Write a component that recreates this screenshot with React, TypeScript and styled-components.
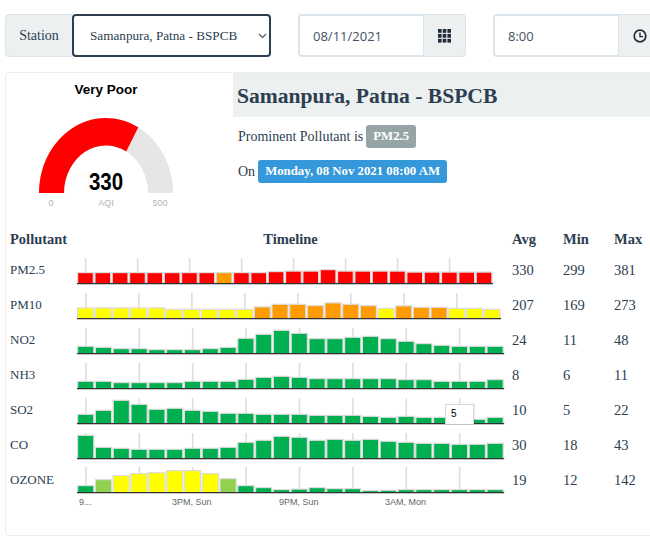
import React, { FC } from "react";
import styled, { createGlobalStyle } from "styled-components";

type Level = "g" | "l" | "y" | "o" | "r";

interface Series {
  name: string;
  pitch: number;
  heights: number[];
  levels: (i: number) => Level;
  avg: number;
  min: number;
  max: number;
}

const FILL: Record<Level, string> = {
  g: "#00b050",
  l: "#92d050",
  y: "#ffff00",
  o: "#ff9a00",
  r: "#ff0000",
};

const SERIES: Series[] = [
  {
    name: "PM2.5",
    pitch: 17.33,
    heights: [11, 11, 11, 11, 11, 11, 11, 11, 11, 11, 11, 12, 12.5, 12.5, 14, 12.5, 12.5, 12.5, 12.5, 11.5, 11.5, 11.5, 11.5, 11.5],
    levels: (i) => (i === 8 ? "o" : "r"),
    avg: 330,
    min: 299,
    max: 381,
  },
  {
    name: "PM10",
    pitch: 17.67,
    heights: [10.7, 10.7, 10.7, 10.7, 10.7, 9.3, 9.3, 9.3, 9.3, 9.3, 11.7, 14.3, 14.3, 13, 15.7, 14.3, 13, 10.3, 12.7, 11.3, 11.3, 10.3, 10.3, 9.3],
    levels: (i) => ((i >= 10 && i <= 16) || (i >= 18 && i <= 20) ? "o" : "y"),
    avg: 207,
    min: 169,
    max: 273,
  },
  {
    name: "NO2",
    pitch: 17.8,
    heights: [7.3, 6.3, 5, 5, 4, 4, 4, 5, 6.3, 15.3, 19.3, 23.3, 20.3, 15, 15, 16.3, 17.3, 15, 12.3, 10, 8.3, 7.3, 7.3, 7.3],
    levels: () => "g",
    avg: 24,
    min: 11,
    max: 48,
  },
  {
    name: "NH3",
    pitch: 17.8,
    heights: [7.3, 7.3, 6, 6, 6, 6, 7.3, 7.3, 7.3, 9.3, 11.3, 12.3, 11.3, 10, 10, 10, 10, 10, 9, 9, 7.3, 7.3, 7.3, 9],
    levels: () => "g",
    avg: 8,
    min: 6,
    max: 11,
  },
  {
    name: "SO2",
    pitch: 17.8,
    heights: [9.3, 13.3, 23.3, 19.3, 14.3, 15.3, 13.3, 12.3, 10.3, 10.3, 9.3, 9.3, 9.3, 8.3, 8.3, 8.3, 7.3, 6.3, 7.3, 6.3, 6.3, 6.3, 4.3, 6.3],
    levels: () => "g",
    avg: 10,
    min: 5,
    max: 22,
  },
  {
    name: "CO",
    pitch: 17.8,
    heights: [23.3, 11.3, 10.3, 9.3, 9.3, 9.3, 10.3, 10.3, 11.3, 16.3, 18.3, 22.3, 21.3, 18.3, 19.3, 18.3, 19.3, 17.3, 16.3, 15.3, 15.3, 14.3, 14.3, 15.3],
    levels: () => "g",
    avg: 30,
    min: 18,
    max: 43,
  },
  {
    name: "OZONE",
    pitch: 17.8,
    heights: [7, 13, 17, 19, 20, 22, 22, 19, 14, 7, 5, 3, 3.5, 5, 4, 4, 2, 2.3, 3, 3, 3, 3, 3, 3],
    levels: (i) => (i === 1 || i === 8 ? "l" : i >= 2 && i <= 7 ? "y" : "g"),
    avg: 19,
    min: 12,
    max: 142,
  },
];

const AXIS_LABELS = [
  { x: 2, text: "9..." },
  { x: 95, text: "3PM, Sun" },
  { x: 202, text: "9PM, Sun" },
  { x: 308, text: "3AM, Mon" },
];

const Spark: FC<{ series: Series; base: number }> = ({ series, base }) => (
  <ChartSvg width={435} height={30}>
    {series.heights.map((_, i) =>
      i % 3 === 0 ? (
        <line
          key={i}
          x1={(i + 0.5) * series.pitch}
          x2={(i + 0.5) * series.pitch}
          y1={base - 25.5}
          y2={base}
          stroke="#dddddd"
          strokeWidth={1.6}
        />
      ) : null
    )}
    {series.heights.map((h, i) => (
      <rect
        key={i}
        x={i * series.pitch + 0.6}
        y={base - h}
        width={series.pitch - 1.6}
        height={h}
        fill={FILL[series.levels(i)]}
        stroke="#dcdcdc"
        strokeWidth={1.2}
      />
    ))}
    <line x1={0} x2={series.pitch * 24} y1={base} y2={base} stroke="#333" strokeWidth={1.4} />
  </ChartSvg>
);

const polar = (rx: number, ry: number, deg: number) => {
  const a = (deg * Math.PI) / 180;
  return `${100 - rx * Math.cos(a)} ${76 - ry * Math.sin(a)}`;
};

const arc = (deg: number) =>
  `M${polar(67, 75, 0)} A67 75 0 0 1 ${polar(67, 75, deg)} L${polar(42, 47.5, deg)} A42 47.5 0 0 0 ${polar(42, 47.5, 0)} Z`;

const Gauge: FC = () => (
  <GaugeSvg width={200} height={94}>
    <path d={arc(180)} fill="#e6e6e6" />
    <path d={arc(118.8)} fill="#ff0000" />
    <text
      x={100}
      y={0}
      transform="translate(0 73) scale(1 1.13)"
      textAnchor="middle"
      fontFamily="'Liberation Sans', sans-serif"
      fontWeight={700}
      fontSize={20.5}
      fill="#000"
    >
      330
    </text>
    <g fontFamily="'Liberation Sans', sans-serif" fontSize={9} fill="#b3b3b3" textAnchor="middle">
      <text x={45} y={89}>0</text>
      <text x={100} y={89}>AQI</text>
      <text x={154} y={89}>500</text>
    </g>
  </GaugeSvg>
);

const GridIcon: FC = () => (
  <svg width={13} height={14} viewBox="0 0 13 14" fill="#1f2d3a">
    {[0, 4.7, 9.4].flatMap((x) =>
      [0, 4.9, 9.8].map((y) => <rect key={`${x}-${y}`} x={x} y={y} width={3.6} height={3.8} />)
    )}
  </svg>
);

const ClockIcon: FC = () => (
  <svg width={14} height={14} viewBox="0 0 14 14" fill="none" stroke="#1f2d3a">
    <circle cx={7} cy={7} r={5.8} strokeWidth={1.7} />
    <path d="M7 3.5V7.6H10" strokeWidth={1.4} />
  </svg>
);

export default function App() {
  return (
    <>
      <GlobalStyle />
      <Toolbar>
        <StationGroup>
          <StationLabel>Station</StationLabel>
          <SelectWrap>
            <StationSelect defaultValue="patna">
              <option value="patna">Samanpura, Patna - BSPCB</option>
            </StationSelect>
            <Chevron width={9} height={6} viewBox="0 0 9 6">
              <path d="M1 1L4.5 4.5L8 1" fill="none" stroke="#666" strokeWidth={1.4} />
            </Chevron>
          </SelectWrap>
        </StationGroup>
        <InputGroup>
          <TextInput readOnly value="08/11/2021" />
          <IconAddon>
            <GridIcon />
          </IconAddon>
        </InputGroup>
        <InputGroup>
          <TextInput readOnly value="8:00" />
          <IconAddon>
            <ClockIcon />
          </IconAddon>
        </InputGroup>
      </Toolbar>

      <Panel>
        <Summary>
          <GaugeColumn>
            <GaugeTitle>Very Poor</GaugeTitle>
            <Gauge />
          </GaugeColumn>
          <Details>
            <StationTitle>Samanpura, Patna - BSPCB</StationTitle>
            <InfoLine>
              Prominent Pollutant is <Badge $color="#95a5a6">PM2.5</Badge>
            </InfoLine>
            <InfoLine>
              On <Badge $color="#3498db">Monday, 08 Nov 2021 08:00 AM</Badge>
            </InfoLine>
          </Details>
        </Summary>

        <HeadRow>
          <HeadCell>Pollutant</HeadCell>
          <TimelineHead>Timeline</TimelineHead>
          <HeadCell>Avg</HeadCell>
          <HeadCell>Min</HeadCell>
          <HeadCell>Max</HeadCell>
        </HeadRow>

        {SERIES.map((s) => (
          <Row key={s.name}>
            <NameCell>{s.name}</NameCell>
            <ChartCell>
              <Spark series={s} base={s.name === "OZONE" ? 25.6 : 26.6} />
              {s.name === "SO2" && <Tip>5</Tip>}
            </ChartCell>
            <Cell>{s.avg}</Cell>
            <Cell>{s.min}</Cell>
            <Cell>{s.max}</Cell>
          </Row>
        ))}

        <AxisRow>
          <AxisCell>
            {AXIS_LABELS.map((l) => (
              <AxisLabel key={l.text} $x={l.x}>
                {l.text}
              </AxisLabel>
            ))}
          </AxisCell>
        </AxisRow>
      </Panel>
    </>
  );
}

const GlobalStyle = createGlobalStyle`
  html, body {
    margin: 0;
    width: 650px;
    height: 540px;
    overflow: hidden;
    background: #fff;
    color: #2c3e50;
    font-family: "Liberation Serif", serif;
    font-size: 14.5px;
  }
`;

const Toolbar = styled.div`
  display: flex;
  gap: 27px;
  width: 700px;
  padding: 14px 0 0 5px;
  height: 43px;
`;

const StationGroup = styled.div`
  display: flex;
  width: 266px;
`;

const StationLabel = styled.div`
  width: 67px;
  box-sizing: border-box;
  display: flex;
  align-items: center;
  justify-content: center;
  background: #ecf0f1;
  border: 1px solid #dce4ec;
  border-right: 0;
  border-radius: 4px 0 0 4px;
  font-size: 14px;
`;

const SelectWrap = styled.div`
  position: relative;
  flex: 1;
  display: flex;
`;

const StationSelect = styled.select`
  flex: 1;
  min-width: 0;
  box-sizing: border-box;
  appearance: none;
  padding: 0 0 0 16px;
  background: #fff;
  color: #2c3e50;
  border: 2px solid #2c3e50;
  border-radius: 4px;
  font-family: inherit;
  font-size: 13.2px;
  outline: none;
`;

const Chevron = styled.svg`
  position: absolute;
  right: 4px;
  top: 19px;
`;

const InputGroup = styled.div`
  display: flex;
  width: 168px;
  flex: none;
`;

const TextInput = styled.input`
  width: 126px;
  box-sizing: border-box;
  padding: 0 13px;
  border: 2px solid #dce4ec;
  border-right-width: 1px;
  border-radius: 4px 0 0 4px;
  color: #3f5266;
  font-family: "Open Sans", sans-serif;
  font-size: 13px;
  outline: none;
`;

const IconAddon = styled.div`
  flex: 1;
  box-sizing: border-box;
  display: flex;
  align-items: center;
  justify-content: center;
  background: #ecf0f1;
  border: 1px solid #dce4ec;
  border-left: 0;
  border-radius: 0 4px 4px 0;
`;

const Panel = styled.div`
  box-sizing: border-box;
  width: 700px;
  height: 464px;
  margin: 15px 0 0 5px;
  border: 1px solid #eeeeee;
  border-radius: 4px;
`;

const Summary = styled.div`
  display: flex;
  height: 157px;
`;

const GaugeColumn = styled.div`
  width: 227px;
  flex: none;
`;

const GaugeTitle = styled.div`
  width: 200px;
  height: 35px;
  padding-top: 9px;
  text-align: center;
  color: #000;
  font-family: "Liberation Sans", sans-serif;
  font-weight: 700;
  font-size: 13.5px;
  line-height: 16px;
`;

const GaugeSvg = styled.svg`
  display: block;
`;

const Details = styled.div`
  flex: 1;
`;

const StationTitle = styled.div`
  height: 44px;
  box-sizing: border-box;
  padding-left: 4px;
  background: #ecf0f1;
  font-size: 21.6px;
  font-weight: 700;
  line-height: 46px;
`;

const InfoLine = styled.div`
  display: flex;
  align-items: center;
  gap: 3px;
  height: 23px;
  margin: 8px 0 12px 5px;
  font-size: 14px;
`;

const Badge = styled.span<{ $color: string }>`
  display: inline-flex;
  align-items: center;
  height: 23px;
  padding: 0 7px;
  border-radius: 3px;
  background: ${(p) => p.$color};
  color: #fff;
  font-weight: 700;
  font-size: 12.8px;
`;

const HeadRow = styled.div`
  display: grid;
  grid-template-columns: 67px 435px 51px 51px 51px;
  padding: 0 0 5px 4px;
  height: 18px;
`;

const HeadCell = styled.div`
  font-weight: 700;
  line-height: 18px;
`;

const TimelineHead = styled(HeadCell)`
  width: 427px;
  text-align: center;
`;

const Row = styled.div`
  display: grid;
  grid-template-columns: 67px 435px 51px 51px 51px;
  height: 35px;
  padding-left: 4px;
`;

const Cell = styled.div`
  line-height: 34px;
`;

const NameCell = styled(Cell)`
  font-size: 13px;
`;

const ChartCell = styled.div`
  position: relative;
  padding-top: 4px;
`;

const ChartSvg = styled.svg`
  display: block;
`;

const Tip = styled.div`
  position: absolute;
  left: 368px;
  top: 11px;
  width: 29px;
  height: 20px;
  box-sizing: border-box;
  padding: 3px 0 0 5px;
  background: #fff;
  border: 1px solid #d8d8d8;
  border-bottom: 0;
  box-shadow: 1px 0 1px rgba(0, 0, 0, 0.08);
  color: #000;
  font-family: "Liberation Sans", sans-serif;
  font-size: 10px;
`;

const AxisRow = styled.div`
  padding-left: 71px;
`;

const AxisCell = styled.div`
  position: relative;
  height: 14px;
  margin-top: -3px;
`;

const AxisLabel = styled.span<{ $x: number }>`
  position: absolute;
  left: ${(p) => p.$x}px;
  top: 0;
  color: #666;
  font-family: "Liberation Sans", sans-serif;
  font-size: 9px;
  line-height: 14px;
  white-space: nowrap;
`;
